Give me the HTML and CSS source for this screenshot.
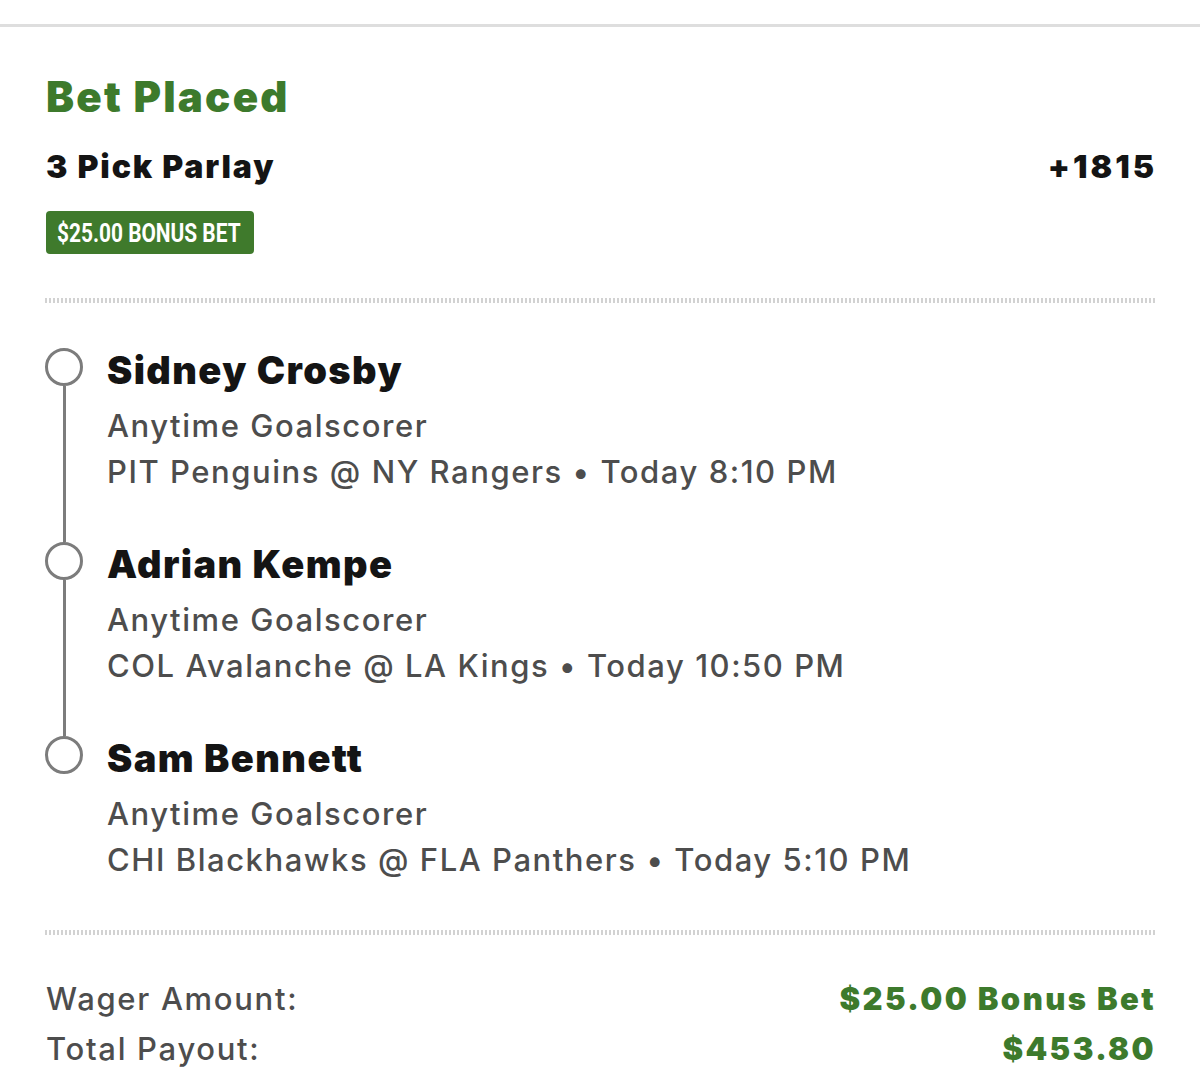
FILE: index.html
```html
<!DOCTYPE html>
<html lang="en">
<head>
<meta charset="utf-8">
<title>Bet Placed</title>
<link rel="stylesheet" href="styles.css">
</head>
<body>
<div class="topbar"></div>
<main class="slip">
  <h1 class="title">Bet Placed</h1>
  <div class="parlay-row">
    <span class="parlay">3 Pick Parlay</span>
    <span class="odds">+1815</span>
  </div>
  <div class="badge"><span class="badge-text">$25.00 BONUS BET</span></div>
  <div class="dots dots-top"></div>

  <ul class="legs">
    <li class="leg">
      <div class="track"><span class="ring"></span><span class="rail"></span></div>
      <div class="info">
        <div class="player">Sidney Crosby</div>
        <div class="market">Anytime Goalscorer</div>
        <div class="game">PIT Penguins @ NY Rangers • Today 8:10 PM</div>
      </div>
    </li>
    <li class="leg">
      <div class="track"><span class="ring"></span><span class="rail"></span></div>
      <div class="info">
        <div class="player">Adrian Kempe</div>
        <div class="market">Anytime Goalscorer</div>
        <div class="game">COL Avalanche @ LA Kings • Today 10:50 PM</div>
      </div>
    </li>
    <li class="leg last">
      <div class="track"><span class="ring"></span></div>
      <div class="info">
        <div class="player">Sam Bennett</div>
        <div class="market">Anytime Goalscorer</div>
        <div class="game">CHI Blackhawks @ FLA Panthers • Today 5:10 PM</div>
      </div>
    </li>
  </ul>

  <div class="dots"></div>

  <div class="summary">
    <div class="sum-row"><span class="label">Wager Amount:</span><span class="value">$25.00 Bonus Bet</span></div>
    <div class="sum-row"><span class="label">Total Payout:</span><span class="value">$453.80</span></div>
  </div>
</main>
</body>
</html>
```

FILE: styles.css
```css
* { box-sizing: border-box; }

html, body {
  margin: 0;
  padding: 0;
  background: #ffffff;
}

body {
  font-family: Inter, "Noto Sans", "DejaVu Sans", sans-serif;
  color: #141414;
}

.topbar {
  margin-top: 24px;
  height: 3px;
  background: #dedede;
}

.slip {
  padding: 45px 46px 0 46px;
}

.title {
  margin: 0;
  font-size: 42px;
  line-height: 50px;
  font-weight: 900;
  color: #3d7a2c;
  letter-spacing: 2.2px;
}

.parlay-row {
  margin-top: 25px;
  display: flex;
  justify-content: space-between;
  align-items: baseline;
  font-size: 32px;
  line-height: 40px;
  font-weight: 900;
  color: #141414;
}

.parlay {
  letter-spacing: 1.85px;
}

.odds {
  letter-spacing: 3px;
  margin-right: -3px;
}

.badge {
  display: flex;
  align-items: center;
  margin-top: 24px;
  width: 208px;
  height: 43px;
  padding: 1px 0 0 11px;
  background: #3f7a2c;
  color: #ffffff;
  border-radius: 4px;
  overflow: hidden;
  white-space: nowrap;
}

.badge-text {
  display: inline-block;
  font-family: Roboto, "Liberation Sans", Arial, sans-serif;
  font-weight: 700;
  font-size: 25px;
  line-height: 1;
  transform: scaleX(0.835);
  transform-origin: left center;
}

.dots {
  height: 5px;
  margin: 0 -1px 0 -1px;
  background: repeating-linear-gradient(90deg, #d2d2d2 0 2px, transparent 2px 4px);
}

.dots-top {
  margin-top: 44px;
}

.legs {
  list-style: none;
  margin: 45px 0 0 0;
  padding: 0;
}

.leg {
  display: flex;
  gap: 24px;
}

.track {
  width: 38px;
  display: flex;
  flex-direction: column;
  align-items: center;
  flex: none;
  margin-left: -1px;
}

.ring {
  width: 38px;
  height: 38px;
  border: 3px solid #7c7c7c;
  border-radius: 50%;
  flex: none;
}

.rail {
  width: 3px;
  flex: 1;
  background: #7c7c7c;
}

.info {
  padding-bottom: 47px;
}

.player {
  font-size: 38px;
  line-height: 40px;
  font-weight: 900;
  color: #141414;
  letter-spacing: 1.4px;
  margin-top: 2px;
  margin-bottom: -2px;
}

.market {
  margin-top: 15px;
}

.market, .game {
  font-size: 31px;
  line-height: 46px;
  color: #4d4d4d;
  font-weight: 500;
  letter-spacing: 1.55px;
}

.summary {
  margin-top: 39px;
}

.sum-row {
  display: flex;
  justify-content: space-between;
  font-size: 31px;
  line-height: 50px;
}

.label {
  color: #4d4d4d;
  font-weight: 500;
  letter-spacing: 1.7px;
}

.value {
  color: #3d7a2c;
  font-weight: 900;
  letter-spacing: 2.4px;
  margin-right: -2px;
}
```
